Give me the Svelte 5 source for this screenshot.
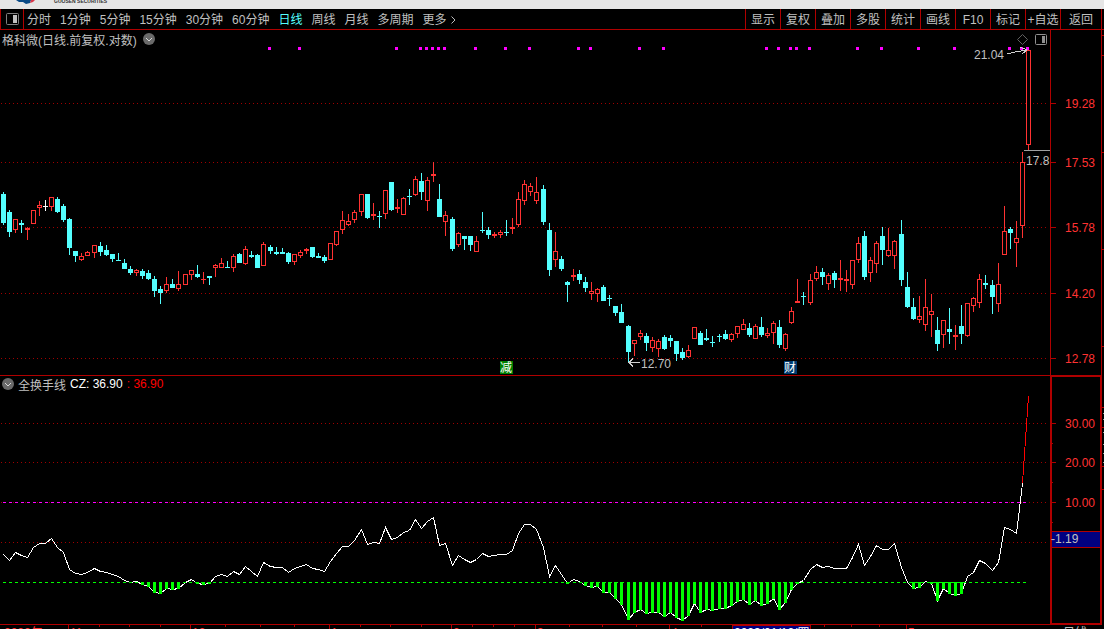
<script>
	const periods = ['分时', '1分钟', '5分钟', '15分钟', '30分钟', '60分钟', '日线', '周线', '月线', '多周期'];
	const tools = ['显示', '复权', '叠加', '多股', '统计', '画线', 'F10', '标记', '+自选', '返回'];

	let period = $state('日线');

	// x, high, body top, body bottom, low, kind (r = up, c = down, w = flat), turnover line
	const RAW = `
3 192 194 223 225 c 554|9 210 212 232 237 c 560|15 219 219 230 233 r 552|21 220 223 225 233 c 555
27 227 228 230 240 r 557|33 210 210 224 224 r 547|39 201 205 208 216 r 543|45 200 206 207 211 w 543
51 197 197 207 211 r 538|57 197 199 212 213 c 547|63 204 206 220 222 c 552|69 218 219 248 255 c 569
75 251 251 256 262 c 573|81 253 256 260 261 r 574|87 251 252 256 256 r 572|94 245 245 253 258 r 568
100 242 246 252 256 c 571|106 245 250 255 256 c 572|112 254 254 259 262 c 574|118 253 260 261 261 c 576
124 259 263 269 269 c 580|130 266 269 273 275 c 582|136 269 270 273 276 r 581|142 269 271 276 279 c 584
148 270 273 279 280 c 586|154 276 279 291 297 c 592|160 286 289 293 304 c 593|166 277 284 291 293 r 588
172 279 284 288 288 c 589|178 271 284 289 291 r 588|185 274 274 285 285 r 582|191 270 270 275 280 r 579
197 265 274 277 278 c 583|203 272 279 280 284 r 584|209 276 276 278 285 c 583|215 264 265 268 277 r 576
221 258 263 268 268 r 574|227 261 267 268 268 c 576|233 254 256 268 272 r 571|239 253 254 263 263 c 574
245 246 249 264 265 r 566|251 251 255 257 258 c 571|257 254 255 268 268 c 576|263 242 244 266 266 r 562
270 245 247 251 254 c 566|276 247 252 254 255 c 567|282 248 252 254 254 c 567|288 252 253 262 264 c 572
294 254 254 262 265 r 568|300 250 252 256 258 r 566|306 248 249 251 254 r 564|312 247 247 257 258 c 568
318 253 256 258 258 c 569|324 255 257 261 263 c 571|330 243 243 260 260 r 561|336 231 231 245 246 r 553
342 211 220 230 234 r 546|348 214 221 225 226 r 546|354 210 212 220 223 r 540|361 194 194 212 216 r 529
367 194 194 218 219 c 544|373 203 214 216 220 r 542|379 211 216 217 228 c 543|385 190 190 214 219 r 527
391 182 182 210 211 c 539|397 199 207 209 213 r 537|403 197 198 215 215 r 532|409 189 196 197 205 c 530
415 176 179 195 196 r 519|421 173 181 192 200 c 528|427 177 180 201 211 r 521|433 162 174 176 182 r 517
439 184 199 217 217 c 545|445 211 215 222 236 r 543|452 217 219 249 251 c 565|458 232 233 245 247 r 555
464 236 236 239 250 c 559|470 236 236 245 251 c 562|476 236 241 252 252 r 559|482 212 230 231 233 c 553
488 227 230 235 239 c 556|494 232 234 236 238 r 555|500 230 232 235 238 r 554|506 220 232 233 236 c 554
512 218 227 229 234 r 550|518 192 199 225 227 r 533|524 180 184 201 205 r 524|530 183 186 192 196 r 524
536 177 192 201 204 r 529|543 185 189 222 225 c 547|549 223 230 270 276 c 576|555 232 251 260 267 r 565
561 256 259 269 271 c 574|567 281 282 285 302 c 583|573 269 275 277 281 r 579|579 270 274 280 284 c 581
585 277 282 288 292 c 585|591 282 291 294 300 r 587|597 288 289 294 302 r 586|603 285 287 301 301 c 592
609 295 298 299 306 c 592|615 306 306 313 316 c 598|621 304 312 323 323 c 604|628 325 326 352 363 c 619
634 340 340 344 356 r 612|640 330 333 337 340 r 609|646 333 336 343 351 c 613|652 337 340 348 352 r 612
658 339 341 349 357 r 612|664 335 337 349 350 c 616|670 335 338 341 347 c 612|676 341 341 354 361 c 617
682 348 352 358 360 c 620|688 345 350 357 358 r 615|694 327 327 339 339 r 603|700 331 333 345 345 c 612
706 329 338 340 341 c 609|712 336 342 343 347 c 610|719 334 336 337 342 c 608|725 330 334 339 340 c 608
731 333 334 340 342 r 605|737 326 326 334 338 r 601|743 319 324 330 330 r 599|749 323 328 335 337 c 604
755 324 326 339 339 r 600|761 317 327 335 337 c 605|767 328 333 336 338 r 603|773 321 323 333 344 r 598
779 320 327 345 348 c 609|785 333 334 349 351 r 602|791 307 311 323 324 r 589|797 279 301 303 303 r 583
803 292 296 297 305 c 580|810 274 280 303 305 r 569|816 266 272 279 281 r 564|822 268 272 277 285 c 567
828 273 275 284 290 r 566|834 271 273 280 288 c 568|840 260 278 280 291 r 568|846 270 279 281 292 r 568
852 260 260 285 289 r 557|858 237 243 260 263 r 544|864 231 236 277 280 c 565|870 257 260 273 282 r 556
876 241 243 264 273 r 545|882 227 236 250 265 c 549|888 228 250 256 257 r 549|894 240 241 256 269 r 543
901 220 234 280 286 c 567|907 272 287 307 308 c 582|913 298 307 319 320 c 588|919 296 316 320 323 r 587
925 279 307 325 331 r 581|931 294 311 315 337 r 583|937 317 330 344 351 c 600|943 320 320 335 348 r 588
949 308 329 332 344 c 593|955 325 335 337 350 r 595|961 305 326 334 344 c 593|967 303 303 336 337 r 576
973 297 298 306 312 r 572|979 274 279 303 308 r 560|985 275 283 285 289 c 563|992 280 285 297 314 c 570
998 263 284 304 312 r 562|1004 206 231 255 255 r 527|1010 227 229 233 249 c 529|1016 221 238 243 267 r 533
1022 152 162 226 238 r 483|1028 50 50 145 150 r 396`;

	const bars = RAW.trim()
		.split(/[|\n]/)
		.map((row) => {
			const [x, hi, top, bot, lo, kind, cz] = row.split(' ');
			return { x: +x, hi: +hi, top: +top, bot: +bot, lo: +lo, kind, cz: +cz };
		});

	const ZERO = 582;
	const below = bars.filter((b) => b.cz > ZERO);
	const line = bars
		.slice(0, -1)
		.map((b) => `${b.x + 0.5},${b.cz + 0.5}`)
		.join(' ');

	const signals = [
		269, 299, 396, 420, 426, 432, 438, 444, 475, 505, 529, 578, 590, 639, 663, 766, 778, 790, 796,
		809, 857, 881, 918, 954, 1009, 1021, 1027
	];

	const prices = [
		[103, '19.28'],
		[162, '17.53'],
		[227, '15.78'],
		[293, '14.20'],
		[358, '12.78']
	];
	const levels = [
		[423, '30.00'],
		[462, '20.00'],
		[502, '10.00'],
		[542, '']
	];

	const months = [
		[68, '11'],
		[190, '12'],
		[329, '1'],
		[451, '2'],
		[535, '3'],
		[669, '4'],
		[906, '5']
	];
	const weeks = [
		99, 129, 160, 225, 260, 294, 360, 390, 421, 472, 493, 514, 569, 602, 636, 701, 824, 851, 879
	];

	// solid body when the outline would leave no hole
	function solid(b) {
		return b.kind !== 'r' || b.bot - b.top < 3;
	}
</script>

{#snippet chevron()}
	<svg class="chevron" viewBox="0 0 12 12" aria-hidden="true">
		<circle cx="6" cy="6" r="6" />
		<path d="M3 5l3 3 3-3" />
	</svg>
{/snippet}

<main>
	<header>
		<svg class="logo" viewBox="0 0 22 4" aria-hidden="true">
			<path class="blue" d="M1 0h15l-1 3-4 1-3-2-4 0z" />
			<path class="pink" d="M16 0h4l-2 2-3 1z" />
		</svg>
		<span>GUOSEN SECURITIES</span>
	</header>

	<nav>
		<button class="layout" aria-label="切换布局">
			<svg viewBox="0 0 13 12">
				<rect x="0.5" y="0.5" width="12" height="11" rx="1" />
				<path d="M7 2h4v8h-4z" />
			</svg>
		</button>
		<div class="periods">
			{#each periods as name}
				<button class:active={period === name} onclick={() => (period = name)}>{name}</button>
			{/each}
			<button class="more">
				更多
				<svg viewBox="0 0 5 8" aria-hidden="true"><path d="M0.5 0.5L4 4 0.5 7.5" /></svg>
			</button>
		</div>
		<div class="tools">
			{#each tools as name}
				<button>{name}</button>
			{/each}
		</div>
	</nav>

	<section>
		<div class="legend">
			<span>格科微(日线.前复权.对数)</span>
			<button aria-label="展开">{@render chevron()}</button>
		</div>
		<svg class="chart" viewBox="0 30 1104 346">
			{#each prices as [y, label]}
				<line class="grid" x1="1" x2="1048" y1={y + 0.5} y2={y + 0.5} />
				<rect class="frame" x="1051" {y} width="5" height="1" />
				<text class="scale" x="1065" y={y + 5}>{label}</text>
			{/each}

			{#each bars as b}
				<g class={b.kind}>
					<rect x={b.x} y={b.hi} width="1" height={b.top - b.hi} />
					<rect x={b.x} y={b.bot} width="1" height={b.lo - b.bot} />
					{#if solid(b)}
						<rect x={b.x - 2} y={b.top} width="5" height={b.bot - b.top} />
					{:else}
						<rect
							class="hollow"
							x={b.x - 1.5}
							y={b.top + 0.5}
							width="4"
							height={b.bot - b.top - 1}
						/>
					{/if}
				</g>
			{/each}

			{#each signals as x}
				<rect class="signal" x={x - 1} y="47" width="3" height="3" />
			{/each}

			<path class="mark" d="M1007 54l8-2 12-2m-7-3l7 3-5 4" />
			<text class="note" x="974" y="59">21.04</text>
			<path class="mark" d="M640 362.5h-11m4-4l-4 4 4 4" />
			<text class="note" x="641" y="368">12.70</text>
			<rect class="last" x="1024" y="150" width="26" height="1" />
			<text class="note" x="1026" y="165">17.8</text>

			<path class="tool" d="M1022.5 34.5l5 5-5 5-5-5z" />
			<rect class="tool bright" x="1035.5" y="34.5" width="11" height="10" rx="1" />
			<rect class="knob" x="1042" y="36" width="3" height="7" />

			<rect class="sell" x="500" y="361" width="13" height="13" />
			<text class="badge" x="500" y="372">减</text>
			<rect class="report" x="784" y="361" width="13" height="13" />
			<text class="badge" x="784" y="372">财</text>

			<rect class="frame" x="1050" y="30" width="1" height="346" />
			<rect class="frame" x="1101" y="30" width="1" height="346" />
			<rect class="frame" x="0" y="375" width="1102" height="1" />
			{#each [35, 55, 152, 249, 346] as y}
				<rect class="frame" x="1102" {y} width="2" height="1" />
			{/each}
		</svg>
	</section>

	<section>
		<div class="legend lower">
			<button aria-label="展开">{@render chevron()}</button>
			<span>全换手线</span>
			<span class="value">CZ: 36.90</span>
			<span class="rise">: 36.90</span>
		</div>
		<svg class="chart" viewBox="0 376 1104 266">
			{#each levels as [y, label]}
				<line class="grid" x1="1" x2="1048" y1={y + 0.5} y2={y + 0.5} />
				{#if label}
					<rect class="frame" x="1052" {y} width="4" height="1" />
					<text class="scale" x="1065" y={y + 5}>{label}</text>
				{/if}
			{/each}
			{#each [443, 482, 522] as y}
				<rect class="frame" x="1052" {y} width="1" height="1" />
			{/each}

			<polyline class="cz" points={line} />
			<line class="cz hot" x1="1022.5" y1="483" x2="1028.5" y2="396" />
			{#each below as b}
				<rect class="deficit" x={b.x - 1} y={ZERO} width="3" height={b.cz - ZERO + 1} />
			{/each}
			<line class="dash upper" x1="3" x2="1026" y1="502.5" y2="502.5" />
			<line class="dash zero" x1="3" x2="1026" y1="582.5" y2="582.5" />

			<rect class="frame" x="0" y="624" width="1102" height="1" />
			{#each weeks as x}
				<rect class="frame" {x} y="625" width="1" height="2" />
			{/each}
			<text class="scale" x="4" y="637">2022年</text>
			{#each months as [x, label]}
				<rect class="frame" {x} y="625" width="1" height="17" />
				<text class="scale" x={x + 2} y="637">{label}</text>
			{/each}
			<rect class="frame" x="732" y="625" width="79" height="17" />
			<rect class="cursor-day" x="733" y="626" width="77" height="16" />
			<text class="date" x="734" y="637">2023/01/12/四</text>
			<text class="note" x="1063" y="637">日线</text>

			<rect class="axis" x="1051" y="376" width="50" height="248" />
			<rect class="cursor" x="1051.5" y="531.5" width="49" height="16" />
			<text class="note" x="1051" y="543">-1.19</text>
			{#each [407, 427, 466, 489] as y}
				<rect class="frame" x="1102" {y} width="2" height="1" />
			{/each}
			{#each [413, 419, 432, 444, 453, 462] as y}
				<rect class="last" x="1103" {y} width="1" height="1" />
			{/each}
		</svg>
	</section>
</main>

<style>
	:global(body) {
		background: #000;
	}

	main {
		height: 100vh;
		overflow: hidden;
		background: #000;
		color: #c0c0c0;
		font-family: 'Liberation Sans', 'Noto Sans CJK SC', sans-serif;
		font-size: 12px;
	}

	button {
		padding: 0;
		border: 0;
		background: none;
		color: inherit;
		font: inherit;
		cursor: pointer;
	}

	header {
		display: flex;
		align-items: flex-start;
		gap: 17px;
		height: 9px;
		padding-left: 15px;
		overflow: hidden;
		background: #e6e6e6;
		color: #333;
		font-size: 5px;
		font-weight: bold;
		line-height: 2px;
	}

	.logo {
		width: 22px;
		height: 4px;
	}

	.blue {
		fill: #0a4a86;
	}

	.pink {
		fill: #d8384a;
	}

	nav {
		display: flex;
		box-sizing: border-box;
		height: 21px;
		padding-right: 2px;
		border-bottom: 1px solid #b00000;
		line-height: 18px;
		white-space: nowrap;
	}

	.layout {
		display: flex;
		align-items: center;
		justify-content: center;
		box-sizing: border-box;
		width: 24px;
		border: solid #b00000;
		border-width: 0 1px;
	}

	.layout svg {
		width: 13px;
		height: 12px;
		fill: none;
		stroke: #808080;
	}

	.layout path {
		fill: #c0c0c0;
		stroke: none;
	}

	.periods {
		display: flex;
		flex: 1;
		gap: 9px;
		padding-left: 3px;
	}

	.periods button,
	.tools button {
		padding-top: 2px;
	}

	.active {
		color: #54ffff;
	}

	.more {
		display: flex;
		align-items: center;
		gap: 4px;
	}

	.more svg {
		width: 5px;
		height: 8px;
		fill: none;
		stroke: #c0c0c0;
	}

	.tools {
		display: flex;
		border-right: 1px solid #b00000;
	}

	.tools button {
		box-sizing: border-box;
		width: 35px;
		border-left: 1px solid #b00000;
	}

	.tools button:last-child {
		width: 41px;
	}

	section {
		position: relative;
	}

	.legend {
		position: absolute;
		top: 0;
		left: 2px;
		display: flex;
		align-items: center;
		gap: 6px;
		height: 18px;
	}

	.lower {
		gap: 4px;
		height: 16px;
	}

	.legend button {
		display: flex;
	}

	.chevron {
		width: 12px;
		height: 12px;
		fill: #6a6a6a;
	}

	.chevron path {
		fill: none;
		stroke: #d8d8d8;
	}

	.value {
		color: #fff;
	}

	.rise {
		color: #f00;
	}

	.chart {
		display: block;
		width: 100%;
		height: auto;
		shape-rendering: crispEdges;
	}

	.frame {
		fill: #b00000;
	}

	.grid {
		stroke: #a00000;
		stroke-dasharray: 1 3;
	}

	.scale {
		fill: #ff3232;
	}

	.note {
		fill: #c0c0c0;
	}

	.r {
		fill: #ff3232;
	}

	.c {
		fill: #54ffff;
	}

	.w {
		fill: #fff;
	}

	.hollow {
		fill: #000;
		stroke: #ff3232;
	}

	.signal {
		fill: #f0f;
	}

	.mark {
		fill: none;
		stroke: #d0d0d0;
	}

	.last {
		fill: #a0a0a0;
	}

	.tool {
		fill: none;
		stroke: #606060;
		shape-rendering: auto;
	}

	.bright {
		stroke: #909090;
	}

	.knob {
		fill: #909090;
	}

	.sell {
		fill: #008000;
	}

	.report {
		fill: #003b70;
	}

	.badge,
	.date {
		fill: #fff;
	}

	.cz {
		fill: none;
		stroke: #fff;
	}

	.hot {
		stroke: #f00;
	}

	.deficit {
		fill: #0f0;
	}

	.dash {
		stroke-dasharray: 3 3;
	}

	.upper {
		stroke: #f0f;
	}

	.zero {
		stroke: #0f0;
	}

	.axis {
		fill: none;
		stroke: #b00000;
		stroke-width: 2px;
	}

	.cursor {
		fill: #000080;
		stroke: #b00000;
	}

	.cursor-day {
		fill: #000080;
	}
</style>
